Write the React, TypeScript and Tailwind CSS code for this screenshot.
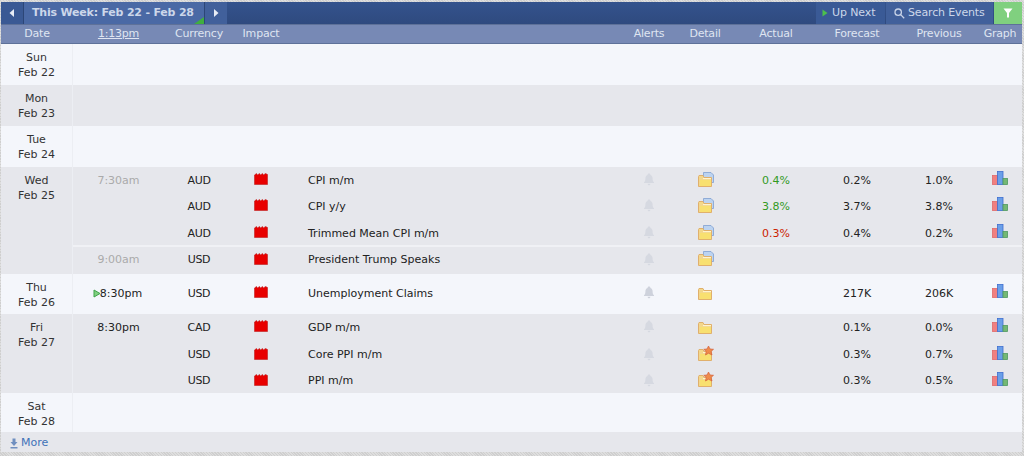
import React from 'react';

const GRID = 'grid grid-cols-[91px_70px_54px_338px_46px_66px_76px_86px_78px_44px]';

type Ev = {
  time?: string;
  timeMuted?: boolean;
  next?: boolean;
  cur: string;
  name: string;
  alertDark?: boolean;
  detail: 'doc' | 'plain' | 'star';
  actual?: string;
  actualColor?: string;
  forecast?: string;
  previous?: string;
  graph?: boolean;
};

function ImpactIcon() {
  return (
    <svg width="14" height="12" viewBox="0 0 14 12" className="block">
      <path d="M0.5 2 L2.5 0.5 L3.5 2 L5.5 0.5 L6.5 2 L8.5 0.5 L9.5 2 L11.5 0.5 L13.5 1.5 L13.5 11.5 L0.5 11.5 Z" fill="#e80000" stroke="#c02020" strokeWidth="0.6" />
    </svg>
  );
}

function BellIcon({ dark }: { dark?: boolean }) {
  return (
    <svg width="12" height="13" viewBox="0 0 12 13" className="block">
      <path
        d="M6 0.5 C7 0.5 7.4 1.2 7.5 1.9 C9 2.5 9.6 3.8 9.6 5.4 C9.6 7.6 10.2 8.4 11 9.3 L11 10 L1 10 L1 9.3 C1.8 8.4 2.4 7.6 2.4 5.4 C2.4 3.8 3 2.5 4.5 1.9 C4.6 1.2 5 0.5 6 0.5 Z M4.6 10.8 L7.4 10.8 C7.2 11.8 6.7 12.3 6 12.3 C5.3 12.3 4.8 11.8 4.6 10.8 Z"
        fill={dark ? '#ced2dc' : '#d6d9e1'}
      />
    </svg>
  );
}

function FolderIcon({ kind }: { kind: 'doc' | 'plain' | 'star' }) {
  return (
    <svg width="16" height="15" viewBox="0 0 16 15" className="block">
      {kind === 'doc' && (
        <path d="M5.5 0.5 L13 0.5 L15.5 3 L15.5 10.5 L5.5 10.5 Z" fill="#bcd3f0" stroke="#7f9fd0" strokeWidth="0.8" />
      )}
      <path d="M0.5 4.5 L0.5 14.5 L13.5 14.5 L13.5 5.5 L6 5.5 L5 3.5 L1 3.5 Z" fill="#f3d78c" stroke="#e0b06c" strokeWidth="1" />
      <path d="M2 8 L13 8 L13 14 L2 14 Z" fill="#f8e070" />
      <path d="M5 6.6 L13 6.6" stroke="#fff7d8" strokeWidth="1" />
      {kind === 'star' && (
        <path
          d="M10.5 0 L12 3 L15.5 3.3 L13 5.5 L14 9 L10.5 7.2 L7.5 9 L8.2 5.5 L5.8 3.3 L9 3 Z"
          fill="#ef8b4a"
          stroke="#d4603c"
          strokeWidth="0.7"
        />
      )}
    </svg>
  );
}

function GraphIcon() {
  return (
    <svg width="16" height="14" viewBox="0 0 16 14" className="block">
      <rect x="0.5" y="4.5" width="5" height="9" fill="#f08080" stroke="#e06a6a" strokeWidth="0.8" />
      <rect x="5.5" y="0.5" width="5.5" height="13" fill="#6a9fe8" stroke="#3f6fd0" strokeWidth="0.8" />
      <rect x="11" y="7.5" width="4.5" height="6" fill="#74b874" stroke="#4f9a5f" strokeWidth="0.8" />
    </svg>
  );
}

function EventRow({ ev, h, border }: { ev: Ev; h: string; border?: boolean }) {
  return (
    <div className={`${GRID} items-center ${h} ${border ? 'border-b-2 border-[#f0f1f5]' : ''}`}>
      <div className={`relative text-center ${ev.timeMuted ? 'text-[#aaaaaa]' : ''}`}>
        {ev.next && (
          <svg width="8" height="9" viewBox="0 0 8 9" className="absolute left-[20px] top-[3px]">
            <path d="M1 1 L7 4.5 L1 8 Z" fill="#7fd07f" stroke="#3fa14a" strokeWidth="1" />
          </svg>
        )}
        <span className={ev.next ? 'pl-[5px]' : ''}>{ev.time}</span>
      </div>
      <div className="text-center tracking-[-0.3px]">{ev.cur}</div>
      <div className="mb-[4px] flex justify-center"><ImpactIcon /></div>
      <div className="pl-[20px]">{ev.name}</div>
      <div className="mb-[3px] flex justify-center"><BellIcon dark={ev.alertDark} /></div>
      <div className="mb-[4px] ml-[1px] flex justify-center"><FolderIcon kind={ev.detail} /></div>
      <div className={`text-center ${ev.actualColor ?? ''}`}>{ev.actual}</div>
      <div className="text-center">{ev.forecast}</div>
      <div className="text-center">{ev.previous}</div>
      <div className="mb-[6px] flex justify-center">{ev.graph && <GraphIcon />}</div>
    </div>
  );
}

function DayCell({ day, date }: { day: string; date: string }) {
  return (
    <div className="w-[72px] shrink-0 border-r border-[#eceef3] pt-[6px] text-center leading-[15px] text-[#333333]">
      <div>{day}</div>
      <div>{date}</div>
    </div>
  );
}

function Day({ day, date, alt, height, children }: { day: string; date: string; alt?: boolean; height: string; children?: React.ReactNode }) {
  return (
    <div className={`flex ${height} ${alt ? 'bg-[#e6e7ec]' : 'bg-[#f4f6fb]'}`}>
      <DayCell day={day} date={date} />
      <div className="flex min-w-0 flex-1 flex-col">{children}</div>
    </div>
  );
}

export default function App() {
  return (
    <div className="h-[456px] w-[1024px] overflow-hidden bg-[repeating-linear-gradient(45deg,#cfcfcf_0,#cfcfcf_1px,#dedede_1px,#dedede_2px)] pb-[4px] pl-[1px] pr-[2px] pt-[2px] font-['DejaVu_Sans',sans-serif] text-[11px] text-[#222222]">
      {/* top bar */}
      <div className="flex h-[22px] bg-gradient-to-b from-[#34538d] to-[#2f4a7f] font-bold text-[#ccd7ea]">
        <button className="flex w-[23px] items-center justify-center border-r border-[#2c4677] bg-[#3a5994]">
          <svg width="6" height="8" viewBox="0 0 6 8"><path d="M5 0 L0.5 4 L5 8 Z" fill="#e8edf6" /></svg>
        </button>
        <div className="relative flex w-[180px] items-center bg-[#4a69a5] pl-[8px] tracking-[-0.2px]">
          This Week: Feb 22 - Feb 28
          <div className="absolute bottom-0 right-0 h-0 w-0 border-b-[7px] border-l-[10px] border-b-[#3fae3f] border-l-transparent" />
        </div>
        <button className="flex w-[23px] items-center justify-center border-l border-[#2c4677] bg-[#41609b]">
          <svg width="6" height="8" viewBox="0 0 6 8"><path d="M1 0 L5.5 4 L1 8 Z" fill="#e8edf6" /></svg>
        </button>
        <div className="flex-1" />
        <div className="flex w-[69px] items-center gap-[4px] bg-[#3a5a96] pl-[6px] font-normal tracking-[-0.1px]">
          <svg width="6" height="8" viewBox="0 0 6 8"><path d="M0.5 0.5 L5.5 4 L0.5 7.5 Z" fill="#4cc04c" /></svg>
          Up Next
        </div>
        <div className="ml-[1px] flex w-[107px] items-center gap-[3px] bg-[#41609b] pl-[8px] font-normal tracking-[-0.15px]">
          <svg width="11" height="11" viewBox="0 0 11 11" fill="none" stroke="#c8d3e8" strokeWidth="1.3">
            <circle cx="4.2" cy="4.2" r="3.2" />
            <path d="M6.6 6.6 L10.2 10.2" />
          </svg>
          Search Events
        </div>
        <div className="ml-[1px] flex max-w-[28px] flex-1 items-center justify-center bg-[#80d07f]">
          <svg width="10" height="10" viewBox="0 0 10 10"><path d="M0.5 0.5 L9.5 0.5 L6 5 L6 9.5 L4 9.5 L4 5 Z" fill="#ffffff" /></svg>
        </div>
      </div>

      {/* column headers */}
      <div className="flex h-[20px] items-center border-y border-y-[#5e7199] bg-[#7789b5] pt-[1px] tracking-[-0.2px] text-[#dfe5f1]">
        <div className="w-[72px] shrink-0 text-center">Date</div>
        <div className={`${GRID} flex-1 items-center`}>
          <div className="text-center underline">1:13pm</div>
          <div className="text-center">Currency</div>
          <div className="text-center">Impact</div>
          <div />
          <div className="text-center">Alerts</div>
          <div className="text-center">Detail</div>
          <div className="text-center">Actual</div>
          <div className="text-center">Forecast</div>
          <div className="text-center">Previous</div>
          <div className="text-center">Graph</div>
        </div>
      </div>

      <Day day="Sun" date="Feb 22" height="h-[41px]" />
      <Day day="Mon" date="Feb 23" alt height="h-[41px]" />
      <Day day="Tue" date="Feb 24" height="h-[41px]" />
      <Day day="Wed" date="Feb 25" alt height="h-[107px]">
        <EventRow h="h-[27px] pt-[1px]" ev={{ time: '7:30am', timeMuted: true, cur: 'AUD', name: 'CPI m/m', detail: 'doc', actual: '0.4%', actualColor: 'text-[#339a1f]', forecast: '0.2%', previous: '1.0%', graph: true }} />
        <EventRow h="h-[26px]" ev={{ cur: 'AUD', name: 'CPI y/y', detail: 'doc', actual: '3.8%', actualColor: 'text-[#339a1f]', forecast: '3.7%', previous: '3.8%', graph: true }} />
        <EventRow h="h-[27px] pt-[3px]" border ev={{ cur: 'AUD', name: 'Trimmed Mean CPI m/m', detail: 'doc', actual: '0.3%', actualColor: 'text-[#cc2200]', forecast: '0.4%', previous: '0.2%', graph: true }} />
        <EventRow h="h-[27px]" ev={{ time: '9:00am', timeMuted: true, cur: 'USD', name: 'President Trump Speaks', detail: 'doc' }} />
      </Day>
      <Day day="Thu" date="Feb 26" height="h-[40px]">
        <EventRow h="h-[40px]" ev={{ time: '8:30pm', next: true, cur: 'USD', name: 'Unemployment Claims', alertDark: true, detail: 'plain', forecast: '217K', previous: '206K', graph: true }} />
      </Day>
      <Day day="Fri" date="Feb 27" alt height="h-[79px]">
        <EventRow h="h-[27px] pt-[1px]" ev={{ time: '8:30pm', cur: 'CAD', name: 'GDP m/m', detail: 'plain', forecast: '0.1%', previous: '0.0%', graph: true }} />
        <EventRow h="h-[26px] pt-[3px]" ev={{ cur: 'USD', name: 'Core PPI m/m', detail: 'star', forecast: '0.3%', previous: '0.7%', graph: true }} />
        <EventRow h="h-[26px] pt-[3px]" ev={{ cur: 'USD', name: 'PPI m/m', detail: 'star', forecast: '0.3%', previous: '0.5%', graph: true }} />
      </Day>
      <Day day="Sat" date="Feb 28" height="h-[39px]" />

      {/* footer */}
      <div className="flex h-[20px] items-center gap-[3px] bg-[#e6e7ec] pl-[9px] pt-[2px] text-[#3f72b8]">
        <svg width="8" height="11" viewBox="0 0 8 11"><path d="M2.5 0.5 L5.5 0.5 L5.5 4 L7.5 4 L4 8 L0.5 4 L2.5 4 Z M0.5 9 L7.5 9 L7.5 10.5 L0.5 10.5 Z" fill="#6f8fc0" /></svg>
        More
      </div>
    </div>
  );
}
